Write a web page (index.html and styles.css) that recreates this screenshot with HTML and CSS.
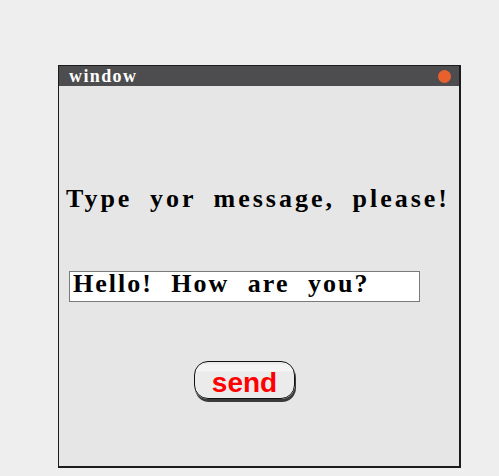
FILE: index.html
```html
<!DOCTYPE html>
<html>
<head>
<meta charset="utf-8">
<link rel="stylesheet" href="styles.css">
</head>
<body>
<div class="window">
  <div class="titlebar">
    <span class="title">window</span>
    <span class="dot"></span>
  </div>
  <div class="content">
    <div class="prompt">Type yor message, please!</div>
    <input class="field" type="text" value="Hello! How are you?">
    <button class="send">send</button>
  </div>
</div>
</body>
</html>
```
FILE: styles.css
```css
html, body {
  margin: 0;
  padding: 0;
  background: #eeeeee;
}
body {
  padding: 65px 0 0 58px;
  width: 499px;
  height: 476px;
  box-sizing: border-box;
  overflow: hidden;
}
.window {
  width: 403px;
  height: 403px;
  box-sizing: border-box;
  border-style: solid;
  border-color: #1c1c1c;
  border-width: 1px 2px 2px 1px;
  background: #e6e6e6;
  display: flex;
  flex-direction: column;
}
.titlebar {
  height: 20px;
  background: #4d4d4f;
  display: flex;
  align-items: center;
  justify-content: space-between;
  padding: 0 8px 0 10px;
}
.title {
  font-family: "Liberation Serif", serif;
  font-weight: bold;
  font-size: 18px;
  line-height: 20px;
  color: #ffffff;
  letter-spacing: 1.4px;
}
.dot {
  width: 13px;
  height: 13px;
  border-radius: 50%;
  background: #e8602c;
}
.content {
  display: flex;
  flex-direction: column;
  align-items: flex-start;
}
.prompt {
  margin: 99px 0 0 7px;
  font-family: "Liberation Serif", serif;
  font-weight: bold;
  font-size: 26px;
  line-height: 28px;
  letter-spacing: 3px;
  word-spacing: 8px;
  color: #000;
  white-space: nowrap;
}
.field {
  margin: 58px 0 0 10px;
  width: 351px;
  height: 31px;
  box-sizing: border-box;
  border: 1px solid #7a7a7a;
  background: #fff;
  padding: 0 3px 5px;
  font-family: "Liberation Serif", serif;
  font-weight: bold;
  font-size: 26px;
  letter-spacing: 2px;
  word-spacing: 10px;
  color: #000;
  outline: none;
}
.send {
  margin: 59px 0 0 135px;
  width: 101px;
  height: 38px;
  box-sizing: border-box;
  border: 1px solid #111;
  border-radius: 14px;
  background: linear-gradient(#ebebeb 0, #ebebeb 2px, #f4f4f4 3px, #f4f4f4 9px, #ebebeb 10px);
  box-shadow: 1px 3px 0 #3a3a3a;
  padding: 5px 0 0;
  font-family: "Liberation Sans", sans-serif;
  font-weight: bold;
  font-size: 28px;
  line-height: 31px;
  color: #ff0000;
}
```
